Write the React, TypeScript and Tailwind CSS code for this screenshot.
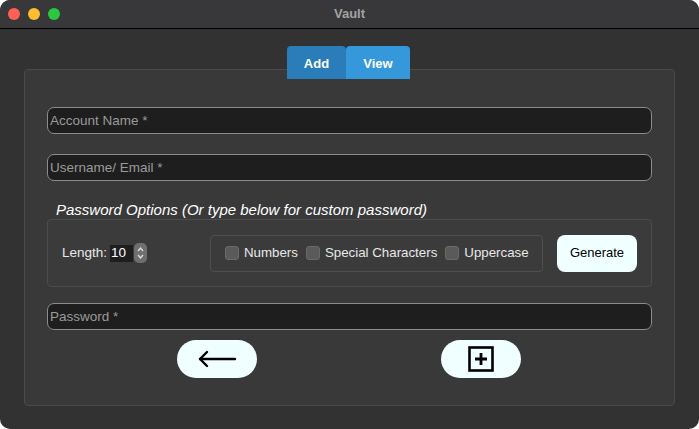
function Check({ label }: { label: string }) {
  return (
    <label className="flex items-center gap-[5px]">
      <span className="w-[14px] h-[14px] rounded-[3px] bg-[#5a5a5a] border border-[#6a6a6a]" />
      <span>{label}</span>
    </label>
  );
}

export default function App() {
  return (
    <div className="w-[699px] h-[429px] bg-white" style={{ fontFamily: '"Liberation Sans", Arial, sans-serif' }}>
      <div className="w-full h-full rounded-[10px] overflow-hidden bg-[#323232] flex flex-col">
        {/* Title bar */}
        <div className="h-[29px] shrink-0 bg-[#38383a] border-b border-black relative flex items-center justify-center">
          <div className="absolute left-[8px] top-[8px] flex gap-[8px]">
            <span className="w-[12px] h-[12px] rounded-full bg-[#fe5f57]" />
            <span className="w-[12px] h-[12px] rounded-full bg-[#febc2e]" />
            <span className="w-[12px] h-[12px] rounded-full bg-[#28c840]" />
          </div>
          <span className="text-[13px] font-bold text-[#a3a3a3]">Vault</span>
        </div>

        {/* Body */}
        <div className="relative flex-1 px-[24px] pt-[40px] pb-[23px] flex flex-col">
          <div className="absolute left-[287px] top-[17px] flex h-[33px] z-10">
            <div className="w-[59px] rounded-t-[4px] bg-[#2a7db8] text-white text-[13px] font-bold flex items-center justify-center pt-[2px]">Add</div>
            <div className="w-[64px] rounded-t-[4px] bg-[#3498db] text-white text-[13px] font-bold flex items-center justify-center pt-[2px]">View</div>
          </div>

          <div className="flex-1 rounded-[4px] border border-[#4a4a4a] bg-[#393939] px-[22px] pt-[37px] flex flex-col text-[13.5px] text-[#e8e8e8]">
            <div className="h-[27px] rounded-[7px] border border-[#8c8c8c] bg-[#1e1e1e] px-[2px] pt-[2px] flex items-center text-[#9a9a9a]">Account Name *</div>
            <div className="mt-[20px] h-[27px] rounded-[7px] border border-[#8c8c8c] bg-[#1e1e1e] px-[2px] pt-[2px] flex items-center text-[#9a9a9a]">Username/ Email *</div>

            <div className="mt-[20px] pl-[9px] text-[15px] italic text-white leading-[17px]">Password Options (Or type below for custom password)</div>

            <div className="mt-[1px] h-[68px] rounded-[4px] border border-[#4c4c4c] bg-[#3b3b3b] flex items-center pl-[14px] pr-[14px]">
              <div className="flex items-center w-[148px]">
                <span>Length:</span>
                <span className="ml-[3px] w-[23px] h-[17px] bg-[#1e1e1e] flex items-center pl-[1px] text-white">10</span>
                <span className="ml-[1px] w-[13px] h-[20px] rounded-[5px] bg-[#6f6f6f] flex flex-col items-center justify-center">
                  <svg width="7" height="16" viewBox="0 0 7 16" fill="none" stroke="#e0e0e0" strokeWidth="1.3">
                    <path d="M1 6 L3.5 3 L6 6" />
                    <path d="M1 10 L3.5 13 L6 10" />
                  </svg>
                </span>
              </div>
              <div className="h-[37px] w-[333px] rounded-[4px] border border-[#4f4f4f] flex items-center pl-[14px] gap-[8px] text-[13.3px]">
                <Check label="Numbers" />
                <Check label="Special Characters" />
                <Check label="Uppercase" />
              </div>
              <button className="ml-[14px] w-[80px] h-[37px] rounded-[8px] bg-[#f0ffff] text-black text-[13px]">Generate</button>
            </div>

            <div className="mt-[16px] h-[27px] rounded-[7px] border border-[#8c8c8c] bg-[#1e1e1e] px-[2px] pt-[2px] flex items-center text-[#9a9a9a]">Password *</div>

            <div className="mt-[10px] flex pl-[130px] gap-[184px]">
              <button className="w-[80px] h-[38px] rounded-full bg-[#f0ffff] flex items-center justify-center">
                <svg width="40" height="20" viewBox="0 0 40 20" fill="none" stroke="#000" strokeWidth="2.4" strokeLinecap="round" strokeLinejoin="round">
                  <path d="M38 10H3" />
                  <path d="M10 3L3 10L10 17" />
                </svg>
              </button>
              <button className="w-[80px] h-[38px] rounded-full bg-[#f0ffff] flex items-center justify-center">
                <svg width="26" height="26" viewBox="0 0 26 26" fill="none" stroke="#000">
                  <rect x="1.5" y="1.5" width="23" height="23" strokeWidth="2.6" />
                  <path d="M13 7v12M7 13h12" strokeWidth="2.8" />
                </svg>
              </button>
            </div>
          </div>
        </div>
      </div>
    </div>
  );
}
